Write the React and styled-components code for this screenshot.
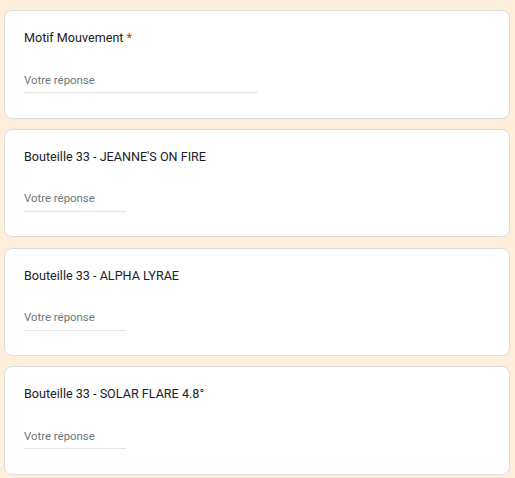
import React from "react";
import styled, { createGlobalStyle } from "styled-components";

const Global = createGlobalStyle`
  html, body { margin: 0; padding: 0; background: #fdefdb; }
  body { font-family: Roboto, "Noto Sans", Arial, sans-serif; }
`;

const Page = styled.div`
  display: flex;
  flex-direction: column;
  gap: 10.33px;
  padding: 10px 6px 10px 4px;
  width: 506px;
`;

const Card = styled.div`
  box-sizing: border-box;
  background: #fff;
  border: 1px solid #dadce0;
  border-radius: 8px;
  padding: 15px 19px 24px;
  height: 108.5px;
  display: flex;
  flex-direction: column;
  gap: 18px;
`;

const Title = styled.div`
  font-size: 12.6px;
  line-height: 24px;
  color: #202124;
`;

const Star = styled.span`
  color: #d93025;
  margin-left: 3px;
`;

const Input = styled.input`
  box-sizing: border-box;
  width: ${(p) => p.$w}px;
  height: 25px;
  border: none;
  border-bottom: 1px solid #e6e6e6;
  padding: 0 0 1px;
  font-family: Roboto, "Noto Sans", Arial, sans-serif;
  font-size: 11.4px;
  color: #202124;
  outline: none;
  background: transparent;
  &::placeholder { color: #70757a; }
`;

const items = [
  { title: "Motif Mouvement", required: true, w: 234 },
  { title: "Bouteille 33 - JEANNE'S ON FIRE", w: 102 },
  { title: "Bouteille 33 - ALPHA LYRAE", w: 102 },
  { title: "Bouteille 33 - SOLAR FLARE 4.8°", w: 102 },
];

export default function App() {
  return (
    <>
      <Global />
      <Page>
        {items.map((it) => (
          <Card key={it.title}>
            <Title>
              {it.title}
              {it.required && <Star>*</Star>}
            </Title>
            <Input $w={it.w} placeholder="Votre réponse" />
          </Card>
        ))}
      </Page>
    </>
  );
}
